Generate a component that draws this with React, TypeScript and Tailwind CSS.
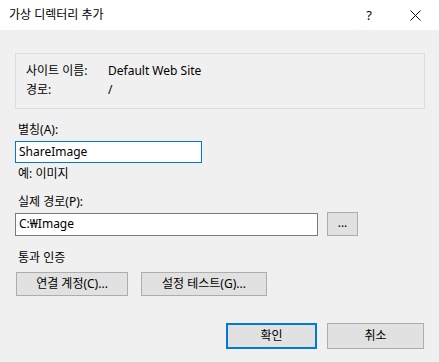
export default function App() {
  const font = { fontFamily: '"Noto Sans", "Noto Sans CJK KR", sans-serif' };

  return (
    <div
      className="w-[440px] h-[362px] bg-[#f0f0f0] flex flex-col text-[12px] leading-[16px] text-black overflow-hidden border-r border-[#d4d4d4]"
      style={font}
    >
      {/* Title bar */}
      <div className="h-[30px] bg-white flex items-center shrink-0">
        <span className="ml-[9px] text-[12px]">가상 디렉터리 추가</span>
        <span className="ml-auto w-[46px] text-center text-[13px]">?</span>
        <span className="w-[46px] mr-[1px] flex justify-center">
          <svg width="11" height="11" viewBox="0 0 11 11">
            <path d="M0.5 0.5 L10.5 10.5 M10.5 0.5 L0.5 10.5" stroke="#111" strokeWidth="1" />
          </svg>
        </span>
      </div>

      {/* Site info */}
      <div className="ml-[15px] mt-[23px] w-[410px] h-[56px] border border-[#dcdcdc] pt-[9px] pl-[10px] flex flex-col gap-[3px]">
        <div className="flex">
          <span className="w-[82px]">사이트 이름:</span>
          <span>Default Web Site</span>
        </div>
        <div className="flex">
          <span className="w-[82px]">경로:</span>
          <span>/</span>
        </div>
      </div>

      {/* Alias */}
      <div className="ml-[18px] mt-[13px]">별칭(A):</div>
      <div className="ml-[15px] mt-[3px] w-[187px] h-[22px] bg-white border border-[#0078d7] flex items-center pl-[3px]">
        ShareImage
      </div>
      <div className="ml-[18px] mt-[3px]">예: 이미지</div>

      {/* Physical path */}
      <div className="ml-[18px] mt-[12px]">실제 경로(P):</div>
      <div className="ml-[15px] mt-[2px] flex items-center gap-[9px]">
        <div className="w-[303px] h-[23px] bg-white border border-[#7a7a7a] flex items-center pl-[3px]">
          C:₩Image
        </div>
        <button className="w-[31px] h-[24px] bg-[#e1e1e1] border border-[#adadad] flex items-center justify-center pb-[2px]">
          ...
        </button>
      </div>

      {/* Pass-through auth */}
      <div className="ml-[18px] mt-[14px]">통과 인증</div>
      <div className="ml-[16px] mt-[6px] flex gap-[13px]">
        <button className="w-[112px] h-[24px] bg-[#e1e1e1] border border-[#adadad] flex items-center justify-center">
          연결 계정(C)...
        </button>
        <button className="w-[126px] h-[24px] bg-[#e1e1e1] border border-[#adadad] flex items-center justify-center">
          설정 테스트(G)...
        </button>
      </div>

      {/* Footer */}
      <div className="mt-[27px] ml-[226px] flex gap-[10px]">
        <button className="w-[91px] h-[26px] bg-[#e1e1e1] border-2 border-[#0078d7] flex items-center justify-center">
          확인
        </button>
        <button className="w-[97px] h-[26px] bg-[#e1e1e1] border border-[#adadad] flex items-center justify-center">
          취소
        </button>
      </div>
    </div>
  );
}
